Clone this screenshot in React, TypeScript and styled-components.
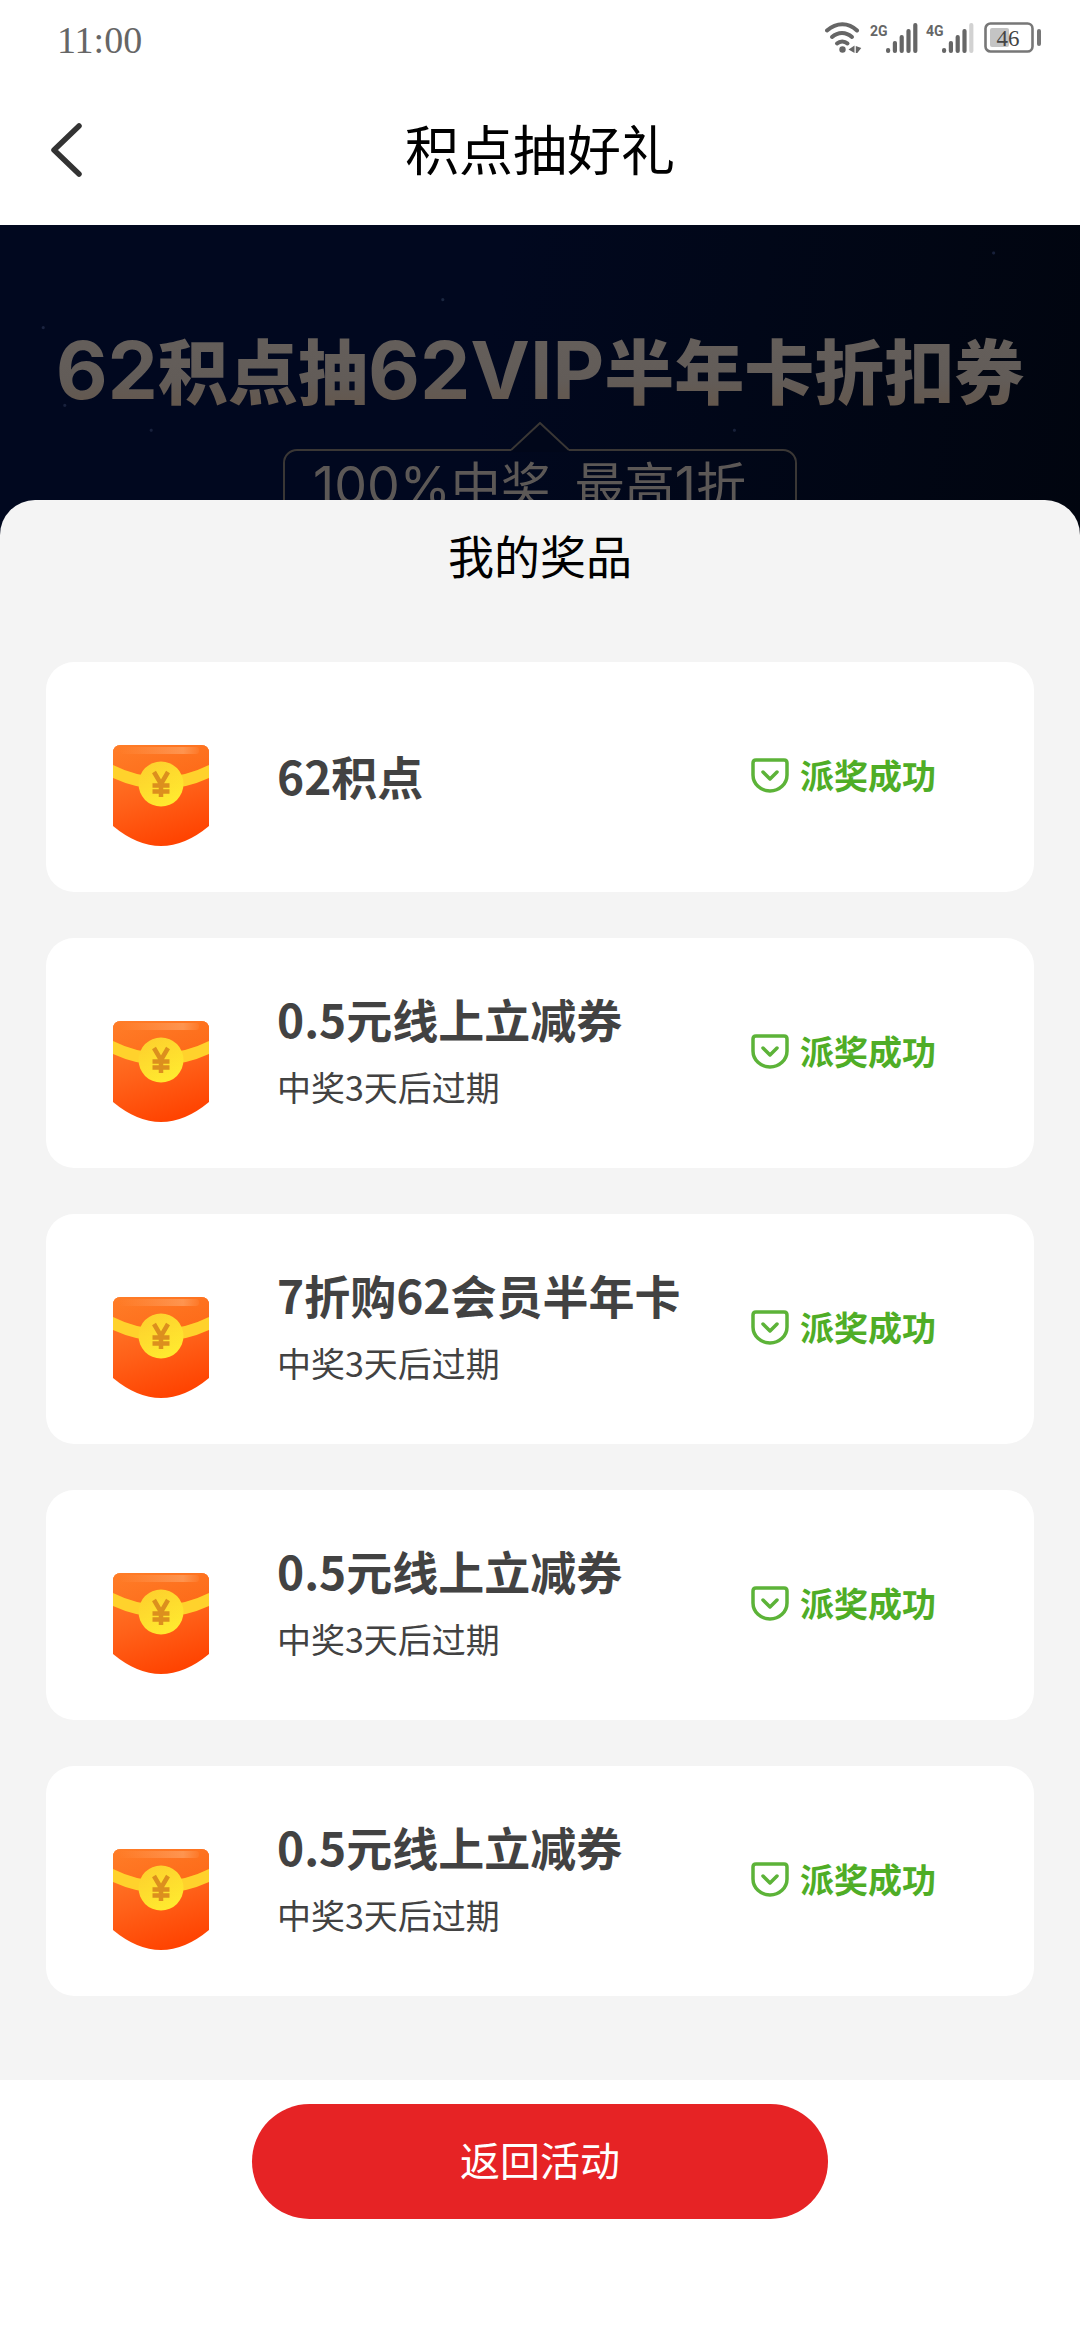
import React from "react";
import styled, { createGlobalStyle } from "styled-components";

const GlobalStyle = createGlobalStyle`
  * { box-sizing: border-box; }
  body {
    margin: 0;
    background: #fff;
    font-family: "Noto Sans CJK SC", "Noto Sans", sans-serif;
  }
  h1, h2, h3, p, ul { margin: 0; padding: 0; }
  svg { display: block; flex: none; }
`;

const Page = styled.div`
  min-height: 100vh;
  display: flex;
  flex-direction: column;
  background: #fff;
`;

const StatusBar = styled.div`
  height: 75px;
  padding: 0 38px 0 57px;
  display: flex;
  align-items: center;
  justify-content: space-between;
  color: #666;
`;

const Clock = styled.span`
  padding-top: 4px;
  font: 38px/44px "Liberation Serif", serif;
`;

const StatusIcons = styled.div`
  display: flex;
  align-items: center;
  gap: 10px;
`;

const SignalGroup = styled.div`
  display: flex;
  align-items: center;
  gap: 8px;
`;

const Signal = styled.div`
  display: flex;
  align-items: flex-start;
`;

const SignalLabel = styled.span`
  width: 16px;
  font: 700 14px/16px Roboto, sans-serif;
`;

const NavBar = styled.header`
  height: 150px;
  padding: 0 45px;
  display: grid;
  grid-template-columns: 60px 1fr 60px;
  align-items: center;
`;

const BackButton = styled.button`
  padding: 0;
  border: 0;
  background: none;
  cursor: pointer;
`;

const NavTitle = styled.h1`
  padding-bottom: 4px;
  font-size: 54px;
  line-height: 60px;
  font-weight: 400;
  text-align: center;
  color: #000;
`;

const Banner = styled.section`
  height: 311px;
  padding-top: 96px;
  overflow: hidden;
  display: flex;
  flex-direction: column;
  align-items: center;
  background:
    radial-gradient(circle at 41% 24%, #1b2740 0 1px, transparent 2px),
    radial-gradient(circle at 92% 9%, #17203a 0 1px, transparent 2px),
    radial-gradient(circle at 14% 66%, #18213c 0 1px, transparent 2px),
    radial-gradient(circle at 4% 33%, #1b2440 0 1px, transparent 2px),
    radial-gradient(circle at 6% 58%, #18213c 0 1px, transparent 2px),
    radial-gradient(circle at 68% 66%, #18213a 0 1px, transparent 2px),
    linear-gradient(100deg, #01081f 0%, #01081f 45%, #010718 68%, #01050f 100%);
`;

const BannerTitle = styled.h2`
  font-size: 70px;
  line-height: 96px;
  font-weight: 900;
  white-space: nowrap;
  color: transparent;
  background: linear-gradient(#645e5a 25%, #625c58 60%, #64564a 95%);
  background-clip: text;
  -webkit-background-clip: text;
`;

const BannerLatin = styled.span`
  font-family: Inter, sans-serif;
  font-weight: 700;
  font-size: 80px;
`;

const Bubble = styled.div`
  position: relative;
  width: 514px;
  height: 120px;
  margin-top: 31px;
  padding-left: 28px;
  display: flex;
  gap: 24px;
  border: 2px solid #3a3735;
  border-radius: 14px;
  font-size: 50px;
  line-height: 62px;
  white-space: nowrap;
  color: #5c5856;
`;

const BubblePointer = styled.svg`
  position: absolute;
  left: 50%;
  top: -29px;
  margin-left: -29px;
`;

const BubbleLatin = styled.span`
  font-family: Inter, sans-serif;
  font-size: 52px;
`;

const Sheet = styled.main`
  position: relative;
  margin-top: -36px;
  padding: 24px 46px 84px;
  border-radius: 35px 35px 0 0;
  background: #f4f4f4;
`;

const SheetTitle = styled.h2`
  font-size: 46px;
  line-height: 60px;
  font-weight: 400;
  text-align: center;
  color: #000;
`;

const PrizeList = styled.ul`
  margin-top: 78px;
  display: flex;
  flex-direction: column;
  gap: 46px;
  list-style: none;
`;

const PrizeCard = styled.li`
  height: 230px;
  padding: 0 98px 0 67px;
  display: grid;
  grid-template-columns: 96px 1fr auto;
  align-items: center;
  column-gap: 68px;
  border-radius: 28px;
  background: #fff;
`;

const PrizeIcon = styled.div`
  padding-top: 38px;
`;

const PrizeText = styled.div`
  padding-bottom: 4px;
  display: flex;
  flex-direction: column;
  gap: 18px;
  white-space: nowrap;
  color: #424242;
`;

const PrizeName = styled.h3`
  font-size: 46px;
  line-height: 54px;
  font-weight: 700;
`;

const PrizeNote = styled.p`
  font-size: 34px;
  line-height: 48px;
`;

const PrizeStatus = styled.div`
  padding-bottom: 4px;
  display: flex;
  align-items: center;
  gap: 11px;
  font-size: 34px;
  line-height: 48px;
  font-weight: 700;
  color: #4fad26;
`;

const Footer = styled.footer`
  flex: 1;
  padding: 24px 46px;
  display: flex;
  justify-content: center;
  align-items: flex-start;
  background: #fff;
`;

const ReturnButton = styled.button`
  width: 576px;
  max-width: 100%;
  height: 115px;
  padding: 0 0 6px;
  border: 0;
  border-radius: 58px;
  background: #e62325;
  color: #fff;
  font-family: inherit;
  font-size: 40px;
  line-height: 56px;
  cursor: pointer;
`;

function WifiIcon() {
  return (
    <svg width="37" height="32" viewBox="0 0 37 32" fill="none" stroke="#666" strokeWidth="4" strokeLinecap="round">
      <path d="M2 8.500C11.500 0 23.500 0 32 8.500" />
      <path d="M7 15c6-5.500 14-5.500 20 0" />
      <path d="M12 21.500c3-2.800 7.500-2.800 10.500 0" />
      <circle cx="17.500" cy="27.500" r="3.200" fill="#666" stroke="none" />
      <path d="M29.500 23.500v7.500l-6-3.500zM30.800 24l5.500 2-4 5h-1.500z" fill="#666" stroke="none" />
    </svg>
  );
}

function SignalBars({ level }: { level: number }) {
  const heights = [5, 12, 18, 24, 30];
  return (
    <svg width="32" height="30" viewBox="0 0 32 30">
      {heights.map((h, i) => (
        <rect key={h} x={i * 6.8} y={30 - h} width="4.200" height={h} rx="2" fill={i < level ? "#666" : "#d2d2d2"} />
      ))}
    </svg>
  );
}

function BatteryIcon() {
  return (
    <svg width="58" height="32" viewBox="0 0 58 32">
      <rect x="1.500" y="1.500" width="47" height="28" rx="5" fill="none" stroke="#777" strokeWidth="2.600" />
      <rect x="6" y="6" width="19" height="19" rx="2" fill="#c4c4c4" />
      <rect x="53" y="7" width="4" height="17" rx="2" fill="#777" />
      <text x="24" y="24" textAnchor="middle" fontFamily="Liberation Serif, serif" fontSize="23" fill="#444">46</text>
    </svg>
  );
}

function BackIcon() {
  return (
    <svg width="44" height="60" viewBox="0 0 44 60" fill="none" stroke="#333" strokeWidth="5.500" strokeLinecap="round" strokeLinejoin="round">
      <path d="M34 6 9 30l25 24" />
    </svg>
  );
}

function EnvelopeIcon() {
  return (
    <svg width="96" height="102" viewBox="0 0 96 102">
      <defs>
        <linearGradient id="pocket" x1="0.300" y1="0" x2="0.600" y2="1">
          <stop offset="0" stopColor="#ff7d2c" />
          <stop offset="0.500" stopColor="#ff6119" />
          <stop offset="1" stopColor="#ff4200" />
        </linearGradient>
        <linearGradient id="flap" x1="0" y1="0" x2="1" y2="1">
          <stop offset="0" stopColor="#ff7d28" />
          <stop offset="1" stopColor="#fd6817" />
        </linearGradient>
        <linearGradient id="gloss" x1="0" y1="0" x2="1" y2="0">
          <stop offset="0" stopColor="#ffb57e" stopOpacity="0" />
          <stop offset="0.800" stopColor="#ffb57e" stopOpacity="0.500" />
          <stop offset="1" stopColor="#ffb57e" stopOpacity="0.100" />
        </linearGradient>
        <linearGradient id="coin" x1="0" y1="0" x2="0.500" y2="1">
          <stop offset="0" stopColor="#fdcd2d" />
          <stop offset="1" stopColor="#ffe92f" />
        </linearGradient>
      </defs>
      <path d="M8 0h80q8 0 8 8v73Q72 101 48 101T0 81V8q0-8 8-8z" fill="url(#pocket)" />
      <path d="M8 0h80q8 0 8 8v13Q72 34 48 34T0 21V8q0-8 8-8z" fill="url(#flap)" />
      <rect x="6" y="2" width="80" height="7" rx="3" fill="url(#gloss)" />
      <path d="M0 20Q24 32 48 32t48-12v13Q72 44 48 44T0 33z" fill="#ffd22c" />
      <circle cx="48" cy="39" r="22.500" fill="url(#coin)" />
      <path d="M41 27l7 12 7-12M48 39v13M39.500 40.500h17M39.500 46.500h17" fill="none" stroke="#dc8f1e" strokeWidth="4.500" />
    </svg>
  );
}

function SuccessIcon() {
  return (
    <svg width="38" height="35" viewBox="0 0 38 35" fill="none" stroke="#5cb338" strokeWidth="3.500" strokeLinecap="round" strokeLinejoin="round">
      <path d="M5 2h28q3 0 3 3v12a17 16 0 0 1-34 0V5q0-3 3-3z" />
      <path d="M12 14l7 7 7-7" />
    </svg>
  );
}

interface Prize {
  id: number;
  name: string;
  note?: string;
}

const prizes: Prize[] = [
  { id: 1, name: "62积点" },
  { id: 2, name: "0.5元线上立减券", note: "中奖3天后过期" },
  { id: 3, name: "7折购62会员半年卡", note: "中奖3天后过期" },
  { id: 4, name: "0.5元线上立减券", note: "中奖3天后过期" },
  { id: 5, name: "0.5元线上立减券", note: "中奖3天后过期" },
];

export default function App() {
  return (
    <Page lang="zh-CN">
      <GlobalStyle />
      <StatusBar>
        <Clock>11:00</Clock>
        <StatusIcons>
          <SignalGroup>
            <WifiIcon />
            <Signal>
              <SignalLabel>2G</SignalLabel>
              <SignalBars level={5} />
            </Signal>
            <Signal>
              <SignalLabel>4G</SignalLabel>
              <SignalBars level={4} />
            </Signal>
          </SignalGroup>
          <BatteryIcon />
        </StatusIcons>
      </StatusBar>
      <NavBar>
        <BackButton type="button" aria-label="返回">
          <BackIcon />
        </BackButton>
        <NavTitle>积点抽好礼</NavTitle>
      </NavBar>
      <Banner>
        <BannerTitle>
          <BannerLatin>62</BannerLatin>积点抽<BannerLatin>62VIP</BannerLatin>半年卡折扣券
        </BannerTitle>
        <Bubble>
          <BubblePointer width="58" height="30" viewBox="0 0 58 30">
            <path d="M0 28.500 29 1l29 27.500V30H0z" fill="#01071a" />
            <path d="M0 28 29 1l29 27" fill="none" stroke="#3a3735" strokeWidth="2" />
          </BubblePointer>
          <span>
            <BubbleLatin>100%</BubbleLatin>中奖
          </span>
          <span>
            最高<BubbleLatin>1</BubbleLatin>折
          </span>
        </Bubble>
      </Banner>
      <Sheet>
        <SheetTitle>我的奖品</SheetTitle>
        <PrizeList>
          {prizes.map((prize) => (
            <PrizeCard key={prize.id}>
              <PrizeIcon>
                <EnvelopeIcon />
              </PrizeIcon>
              <PrizeText>
                <PrizeName>{prize.name}</PrizeName>
                {prize.note && <PrizeNote>{prize.note}</PrizeNote>}
              </PrizeText>
              <PrizeStatus>
                <SuccessIcon />
                派奖成功
              </PrizeStatus>
            </PrizeCard>
          ))}
        </PrizeList>
      </Sheet>
      <Footer>
        <ReturnButton type="button">返回活动</ReturnButton>
      </Footer>
    </Page>
  );
}
